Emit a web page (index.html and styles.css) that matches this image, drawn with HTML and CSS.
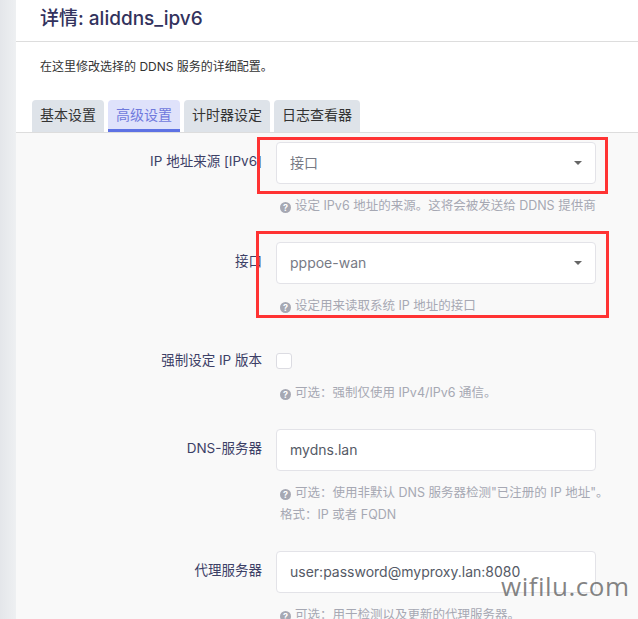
FILE: index.html
```html
<!DOCTYPE html>
<html>
<head>
<meta charset="utf-8">
<title>详情: aliddns_ipv6</title>
<link rel="stylesheet" href="styles.css">
</head>
<body>

<div class="sidebar"></div>

<div class="main">

<h2 class="title">详情: aliddns_ipv6</h2>

<div class="desc">在这里修改选择的 DDNS 服务的详细配置。</div>

<ul class="tabs">
<li class="tab">基本设置</li>
<li class="tab active">高级设置</li>
<li class="tab">计时器设定</li>
<li class="tab">日志查看器</li>
</ul>

<div class="panel">

<div class="row">
<div class="label">IP 地址来源 [IPv6]</div>
<div class="field">
<div class="select">接口<span class="caret"></span></div>
<div class="help"><span class="qicon">?</span>设定 IPv6 地址的来源。这将会被发送给 DDNS 提供商</div>
</div>
<div class="mark mark1"></div>
</div>

<div class="row">
<div class="label">接口</div>
<div class="field">
<div class="select">pppoe-wan<span class="caret"></span></div>
<div class="help"><span class="qicon">?</span>设定用来读取系统 IP 地址的接口</div>
</div>
<div class="mark mark2"></div>
</div>

<div class="row checkrow">
<div class="label">强制设定 IP 版本</div>
<div class="field">
<div class="checkwrap"><span class="checkbox"></span></div>
<div class="help"><span class="qicon">?</span>可选：强制仅使用 IPv4/IPv6 通信。</div>
</div>
</div>

<div class="row">
<div class="label">DNS-服务器</div>
<div class="field">
<div class="input">mydns.lan</div>
<div class="help"><span class="qicon">?</span>可选：使用非默认 DNS 服务器检测"已注册的 IP 地址"。<br>格式：IP 或者 FQDN</div>
</div>
</div>

<div class="row">
<div class="label">代理服务器</div>
<div class="field">
<div class="input">user:password@myproxy.lan:8080</div>
<div class="help"><span class="qicon">?</span>可选：用于检测以及更新的代理服务器。</div>
</div>
</div>

</div>

</div>

<div class="watermark">wifilu.com</div>

</body>
</html>
```

FILE: styles.css
```css
html, body{
margin:0;
padding:0;
height:100%;
overflow:hidden;
}

body{
font-family: Inter, "Noto Sans CJK SC", sans-serif;
background-color:#f9f9f9;
color:#32325d;
display:flex;
}

.sidebar{
width:16px;
flex-shrink:0;
background:linear-gradient(to right, #e4e6ea, #eef0f2);
}

.main{
flex:1;
background-color:white;
}

.title{
margin:0;
height:41px;
border-bottom:1px solid #dddddd;
padding-left:24px;
font-size:19px;
font-weight:500;
line-height:38px;
color:#32325d;
}

.desc{
padding:17px 0 0 24px;
height:41px;
font-size:12px;
line-height:16px;
color:#333;
}

.tabs{
list-style:none;
margin:0;
padding:0 0 0 16px;
display:flex;
gap:4px;
height:32px;
border-bottom:1px solid #dddddd;
}

.tab{
background-color:#dee3e9;
border-radius:4px 4px 0 0;
padding:0 8px;
font-size:14px;
line-height:30px;
height:32px;
box-sizing:border-box;
color:#333;
}

.tab.active{
background-color:#dfe2fb;
color:#6f79dd;
border-bottom:3px solid #5e72e4;
}

.panel{
background-color:#f9f9f9;
padding-top:9px;
height:100%;
}

.row{
position:relative;
display:flex;
margin-bottom:25px;
}

.label{
width:246px;
flex-shrink:0;
text-align:right;
font-size:13.5px;
line-height:20px;
padding-top:9px;
color:#3c4066;
}

.field{
margin-left:14px;
width:320px;
}

.select, .input{
position:relative;
height:42px;
box-sizing:border-box;
border:1px solid #e3e3e8;
border-radius:4px;
background-color:white;
padding-left:13px;
font-size:14px;
line-height:40px;
}

.select{
color:#777a85;
}

.input{
color:#555a66;
}

.caret{
position:absolute;
right:13px;
top:18px;
width:0;
height:0;
border-left:4px solid transparent;
border-right:4px solid transparent;
border-top:4px solid #666;
}

.checkrow .label{
padding-top:8px;
}

.checkwrap{
padding:11px 0 2px 0;
height:16px;
}

.checkbox{
display:block;
width:14px;
height:14px;
border:1px solid #dcdce2;
border-radius:3px;
background-color:white;
}

.help{
margin-top:11px;
padding-left:4px;
font-size:12.5px;
line-height:22px;
color:#a6a8b3;
white-space:nowrap;
}

.qicon{
display:inline-block;
width:11px;
height:11px;
border-radius:50%;
background-color:#a6a8b3;
color:white;
font-size:9px;
font-weight:bold;
line-height:11px;
text-align:center;
margin-right:4px;
vertical-align:-1px;
}

.mark{
position:absolute;
border:3px solid #ff3333;
box-sizing:border-box;
}

.mark1{
left:241px;
top:-5px;
width:351px;
height:57px;
}

.mark2{
left:240px;
top:-11px;
width:353px;
height:87px;
}

.watermark{
position:absolute;
left:501px;
top:570px;
font-family:"Open Sans", sans-serif;
font-size:26px;
line-height:32px;
color:rgba(110,110,110,0.85);
letter-spacing:0.5px;
}
```
